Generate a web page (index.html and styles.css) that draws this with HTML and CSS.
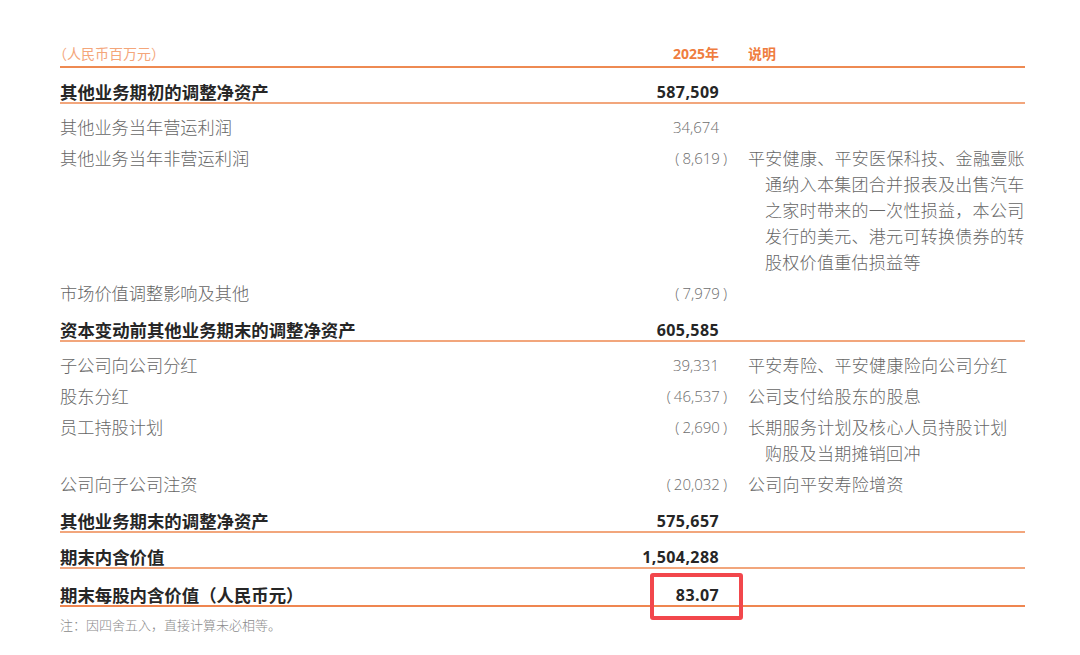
FILE: index.html
```html
<!DOCTYPE html>
<html lang="zh-CN">
<head>
<meta charset="utf-8">
<link rel="stylesheet" href="styles.css">
</head>
<body>
<div class="page">
  <table class="ev">
    <colgroup>
      <col class="c-label">
      <col class="c-num">
      <col class="c-note">
    </colgroup>
    <thead>
      <tr class="head">
        <th class="label unit">（人民币百万元）</th>
        <th class="num pos">2025年</th>
        <th class="note">说明</th>
      </tr>
    </thead>
    <tbody>
      <tr class="bold">
        <td class="label">其他业务期初的调整净资产</td>
        <td class="num pos">587,509</td>
        <td class="note"></td>
      </tr>
      <tr class="reg first">
        <td class="label">其他业务当年营运利润</td>
        <td class="num pos">34,674</td>
        <td class="note"></td>
      </tr>
      <tr class="reg">
        <td class="label">其他业务当年非营运利润</td>
        <td class="num"><span class="po">(</span>8,619<span class="pc">)</span></td>
        <td class="note"><div class="hang">平安健康、平安医保科技、金融壹账<br>通纳入本集团合并报表及出售汽车<br>之家时带来的一次性损益，本公司<br>发行的美元、港元可转换债券的转<br>股权价值重估损益等</div></td>
      </tr>
      <tr class="reg last">
        <td class="label">市场价值调整影响及其他</td>
        <td class="num"><span class="po">(</span>7,979<span class="pc">)</span></td>
        <td class="note"></td>
      </tr>
      <tr class="bold">
        <td class="label">资本变动前其他业务期末的调整净资产</td>
        <td class="num pos">605,585</td>
        <td class="note"></td>
      </tr>
      <tr class="reg first">
        <td class="label">子公司向公司分红</td>
        <td class="num pos">39,331</td>
        <td class="note"><div class="hang">平安寿险、平安健康险向公司分红</div></td>
      </tr>
      <tr class="reg">
        <td class="label">股东分红</td>
        <td class="num"><span class="po">(</span>46,537<span class="pc">)</span></td>
        <td class="note"><div class="hang">公司支付给股东的股息</div></td>
      </tr>
      <tr class="reg">
        <td class="label">员工持股计划</td>
        <td class="num"><span class="po">(</span>2,690<span class="pc">)</span></td>
        <td class="note"><div class="hang">长期服务计划及核心人员持股计划<br>购股及当期摊销回冲</div></td>
      </tr>
      <tr class="reg last">
        <td class="label">公司向子公司注资</td>
        <td class="num"><span class="po">(</span>20,032<span class="pc">)</span></td>
        <td class="note"><div class="hang">公司向平安寿险增资</div></td>
      </tr>
      <tr class="bold">
        <td class="label">其他业务期末的调整净资产</td>
        <td class="num pos">575,657</td>
        <td class="note"></td>
      </tr>
      <tr class="bold">
        <td class="label">期末内含价值</td>
        <td class="num pos">1,504,288</td>
        <td class="note"></td>
      </tr>
      <tr class="bold final">
        <td class="label">期末每股内含价值（人民币元）</td>
        <td class="num pos"><span class="marked">83.07</span></td>
        <td class="note"></td>
      </tr>
    </tbody>
  </table>
  <p class="footnote">注：因四舍五入，直接计算未必相等。</p>
</div>
</body>
</html>
```

FILE: styles.css
```css
html, body {
  margin: 0;
  padding: 0;
  background: #ffffff;
}

body {
  font-family: "Open Sans", "Noto Sans CJK SC", sans-serif;
  color: #666666;
}

.page {
  padding: 42px 0 0 60px;
  width: 965px;
}

.ev {
  width: 965px;
  border-collapse: collapse;
  table-layout: fixed;
}

.c-label { width: 560px; }
.c-num { width: 107px; }
.c-note { width: 298px; }

.ev th,
.ev td {
  padding: 0;
  vertical-align: top;
  text-align: left;
}

.ev .num {
  text-align: right;
  white-space: nowrap;
}

.ev .num.pos {
  padding-right: 8px;
}

.ev .note {
  padding-left: 21px;
}

.po { margin-right: 3px; }
.pc { margin-left: 3px; }

/* header */
.head th {
  padding-top: 2px;
  padding-bottom: 2px;
  line-height: 20px;
  font-size: 14px;
  font-weight: 700;
  color: #ef7d3f;
  border-bottom: 2px solid #ee8a52;
}

.head th.unit {
  font-weight: 400;
  color: #f4a67a;
  text-indent: -7px;
}

/* bold summary rows */
.bold td {
  padding-top: 14px;
  padding-bottom: 0;
  line-height: 20px;
  font-weight: 700;
  color: #262626;
  border-bottom: 2px solid #f2a67c;
}

.bold .label {
  font-size: 17.4px;
  font-family: "Noto Sans CJK SC", sans-serif;
}

.bold .num {
  font-size: 16px;
  letter-spacing: 0.4px;
}

.bold.final td {
  padding-top: 16px;
  border-bottom: 2px solid #ef8650;
}

/* regular rows */
.reg td {
  padding-top: 5px;
  line-height: 26px;
  font-weight: 300;
  color: #666666;
}

.reg.first td {
  padding-top: 10px;
}

.reg .label {
  font-size: 17.2px;
  font-family: "Noto Sans CJK SC", sans-serif;
}

.reg .num {
  font-size: 15px;
  color: #6e6e6e;
}

.reg .note {
  font-size: 17px;
  font-family: "Noto Sans CJK SC", sans-serif;
  letter-spacing: 0.3px;
}

.hang {
  padding-left: 17px;
  text-indent: -17px;
  white-space: nowrap;
}

/* annotation box */
.marked {
  position: relative;
  display: inline-block;
}

.marked::after {
  content: "";
  position: absolute;
  left: -26px;
  right: -24px;
  top: -12px;
  bottom: -15px;
  border: 4px solid #f2474c;
  border-radius: 3px;
}

.footnote {
  margin: 0;
  padding-top: 9px;
  font-family: "Noto Sans CJK SC", sans-serif;
  font-size: 13px;
  line-height: 18px;
  font-weight: 300;
  color: #8a8a8a;
}
```
